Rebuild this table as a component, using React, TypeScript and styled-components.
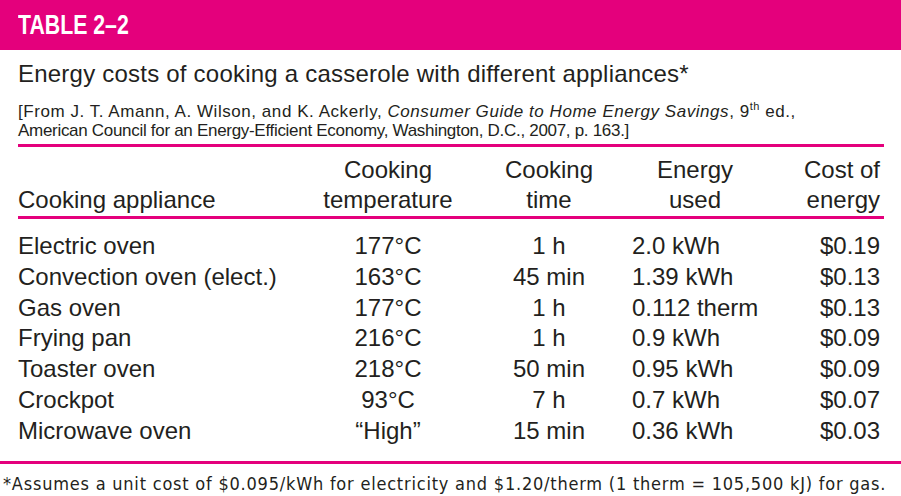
import styled, { createGlobalStyle } from 'styled-components'

const GlobalStyle = createGlobalStyle`
  html, body {
    margin: 0;
    padding: 0;
    background: #ffffff;
  }
  body {
    font-family: "Liberation Sans", Arial, sans-serif;
    color: #231f20;
  }
`

const PINK = '#e4007c'

const Page = styled.div`
  width: 901px;
  height: 496px;
  overflow: hidden;
  background: #fff;
`

const TitleBar = styled.div`
  height: 50px;
  background: ${PINK};
  display: flex;
  align-items: center;
  padding-left: 18px;
`

const TableLabel = styled.h1`
  margin: 0;
  color: #fff;
  font-family: "Liberation Sans", Arial, sans-serif;
  font-weight: 700;
  font-size: 28px;
  line-height: 1;
  transform: scaleX(0.76);
  transform-origin: left center;
  white-space: nowrap;
`

const Body = styled.div`
  padding: 10px 17px 0 18px;
`

const Caption = styled.h2`
  margin: 0;
  font-weight: 400;
  font-size: 24px;
  line-height: 28px;
  letter-spacing: 0.22px;
  white-space: nowrap;
`

const Source = styled.p`
  margin: 14px 0 0;
  font-size: 17px;
  line-height: 19px;
  white-space: nowrap;
  padding-bottom: 4px;
  border-bottom: 3px solid ${PINK};

  sup {
    font-size: 11px;
    line-height: 0;
  }
`

const SourceLine = styled.span<{ $spacing: number }>`
  display: block;
  letter-spacing: ${p => p.$spacing}px;
`

const Grid = styled.div`
  display: grid;
  grid-template-columns: 290px 160px 162px 130px 1fr;
  font-size: 24px;
`

const HeadRow = styled(Grid)`
  margin-top: 8px;
  line-height: 30px;
  padding-bottom: 1px;
  border-bottom: 3px solid ${PINK};
`

const Rows = styled.div`
  margin-top: 12px;
  padding-bottom: 14px;
`

const Row = styled(Grid)`
  line-height: 30.8px;
`

type Align = 'left' | 'center' | 'right'

const Cell = styled.div<{ $align: Align; $pad?: string }>`
  text-align: ${p => p.$align};
  padding: ${p => p.$pad || '0'};
  white-space: nowrap;
  align-self: end;
`

const BottomRule = styled.div`
  height: 3px;
  background: ${PINK};
`

const Footnote = styled.p`
  margin: 9px 0 0 3px;
  font-family: "Liberation Sans Narrow", "DejaVu Sans Condensed", "Liberation Sans", sans-serif;
  font-stretch: condensed;
  font-size: 18px;
  line-height: 22px;
  letter-spacing: 0.78px;
  white-space: nowrap;
`

const rows = [
  ['Electric oven', '177°C', '1 h', '2.0 kWh', '$0.19'],
  ['Convection oven (elect.)', '163°C', '45 min', '1.39 kWh', '$0.13'],
  ['Gas oven', '177°C', '1 h', '0.112 therm', '$0.13'],
  ['Frying pan', '216°C', '1 h', '0.9 kWh', '$0.09'],
  ['Toaster oven', '218°C', '50 min', '0.95 kWh', '$0.09'],
  ['Crockpot', '93°C', '7 h', '0.7 kWh', '$0.07'],
  ['Microwave oven', '“High”', '15 min', '0.36 kWh', '$0.03']
]

const App = () => {
  return (
    <Page>
      <GlobalStyle />
      <TitleBar>
        <TableLabel>TABLE 2–2</TableLabel>
      </TitleBar>
      <Body>
        <Caption>Energy costs of cooking a casserole with different appliances*</Caption>
        <Source>
          <SourceLine $spacing={0.55}>
            [From J. T. Amann, A. Wilson, and K. Ackerly,{' '}
            <i>Consumer Guide to Home Energy Savings</i>, 9<sup>th</sup> ed.,
          </SourceLine>
          <SourceLine $spacing={-0.3}>
            American Council for an Energy-Efficient Economy, Washington, D.C., 2007, p. 163.]
          </SourceLine>
        </Source>
        <HeadRow>
          <Cell $align="left">Cooking appliance</Cell>
          <Cell $align="center">
            Cooking
            <br />
            temperature
          </Cell>
          <Cell $align="center">
            Cooking
            <br />
            time
          </Cell>
          <Cell $align="center">
            Energy
            <br />
            used
          </Cell>
          <Cell $align="right" $pad="0 4px 0 0">
            Cost of
            <br />
            energy
          </Cell>
        </HeadRow>
        <Rows>
          {rows.map(r => (
            <Row key={r[0]}>
              <Cell $align="left">{r[0]}</Cell>
              <Cell $align="center">{r[1]}</Cell>
              <Cell $align="center">{r[2]}</Cell>
              <Cell $align="left" $pad="0 0 0 2px">{r[3]}</Cell>
              <Cell $align="right" $pad="0 4px 0 0">{r[4]}</Cell>
            </Row>
          ))}
        </Rows>
      </Body>
      <BottomRule />
      <Footnote>
        *Assumes a unit cost of $0.095/kWh for electricity and $1.20/therm (1 therm = 105,500 kJ) for gas.
      </Footnote>
    </Page>
  )
}

export default App
